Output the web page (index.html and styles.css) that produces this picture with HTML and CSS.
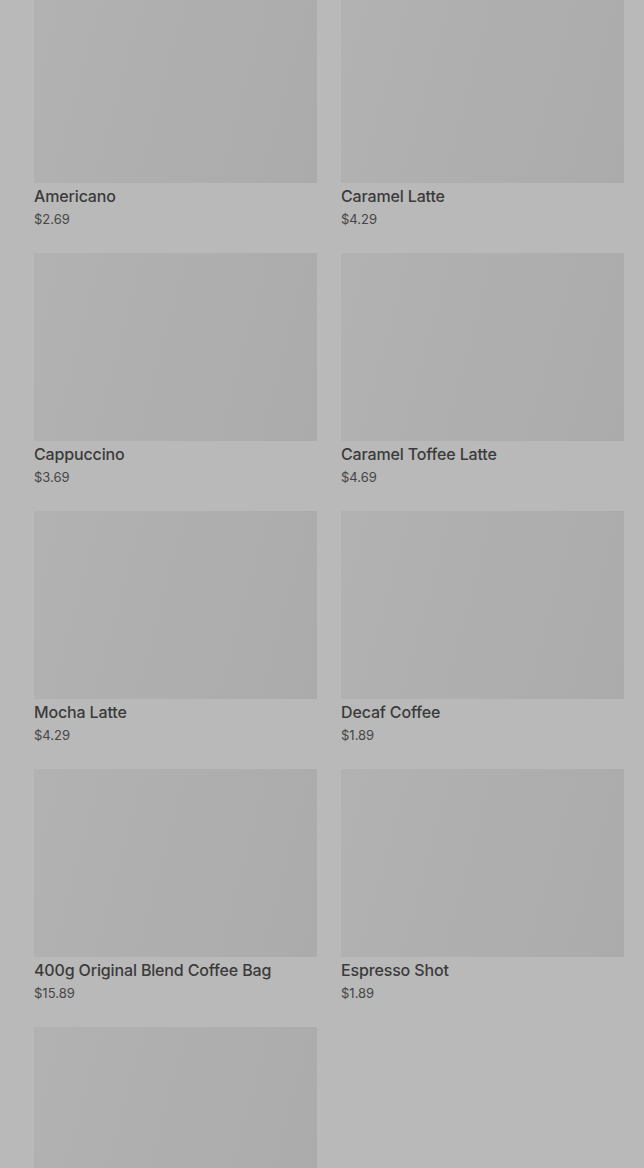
FILE: index.html
```html
<!DOCTYPE html>
<html lang="en">
<head>
  <meta charset="UTF-8">
  <title>Menu</title>
  <link rel="stylesheet" href="styles.css">
</head>
<body>

  <div class="products">
    <div class="card">
      <div class="thumb"></div>
      <h3 class="name">Americano</h3>
      <p class="price">$2.69</p>
    </div>
    <div class="card">
      <div class="thumb"></div>
      <h3 class="name">Caramel Latte</h3>
      <p class="price">$4.29</p>
    </div>
    <div class="card">
      <div class="thumb"></div>
      <h3 class="name">Cappuccino</h3>
      <p class="price">$3.69</p>
    </div>
    <div class="card">
      <div class="thumb"></div>
      <h3 class="name">Caramel Toffee Latte</h3>
      <p class="price">$4.69</p>
    </div>
    <div class="card">
      <div class="thumb"></div>
      <h3 class="name">Mocha Latte</h3>
      <p class="price">$4.29</p>
    </div>
    <div class="card">
      <div class="thumb"></div>
      <h3 class="name">Decaf Coffee</h3>
      <p class="price">$1.89</p>
    </div>
    <div class="card">
      <div class="thumb"></div>
      <h3 class="name">400g Original Blend Coffee Bag</h3>
      <p class="price">$15.89</p>
    </div>
    <div class="card">
      <div class="thumb"></div>
      <h3 class="name">Espresso Shot</h3>
      <p class="price">$1.89</p>
    </div>
    <div class="card">
      <div class="thumb"></div>
    </div>
  </div>

</body>
</html>
```

FILE: styles.css
```css
html, body {
  height: 100%;
}
body {
  margin: 0;
  background: #b9b9b9;
  font-family: Inter, Roboto, "Liberation Sans", sans-serif;
  overflow: hidden;
}
.products {
  display: grid;
  grid-template-columns: 1fr 1fr;
  column-gap: 24px;
  row-gap: 25px;
  padding: 0 20px 0 34px;
  margin-top: -5px;
}
.thumb {
  aspect-ratio: 283 / 188;
  background: linear-gradient(105deg, #b2b2b2, #ababab);
}
.name {
  margin: 3px 0 0;
  font-size: 16px;
  line-height: 20px;
  font-weight: 500;
  letter-spacing: -0.15px;
  color: #3b3b3b;
}
.price {
  margin: 4px 0 0;
  font-size: 13px;
  line-height: 18px;
  color: #464646;
}
```
